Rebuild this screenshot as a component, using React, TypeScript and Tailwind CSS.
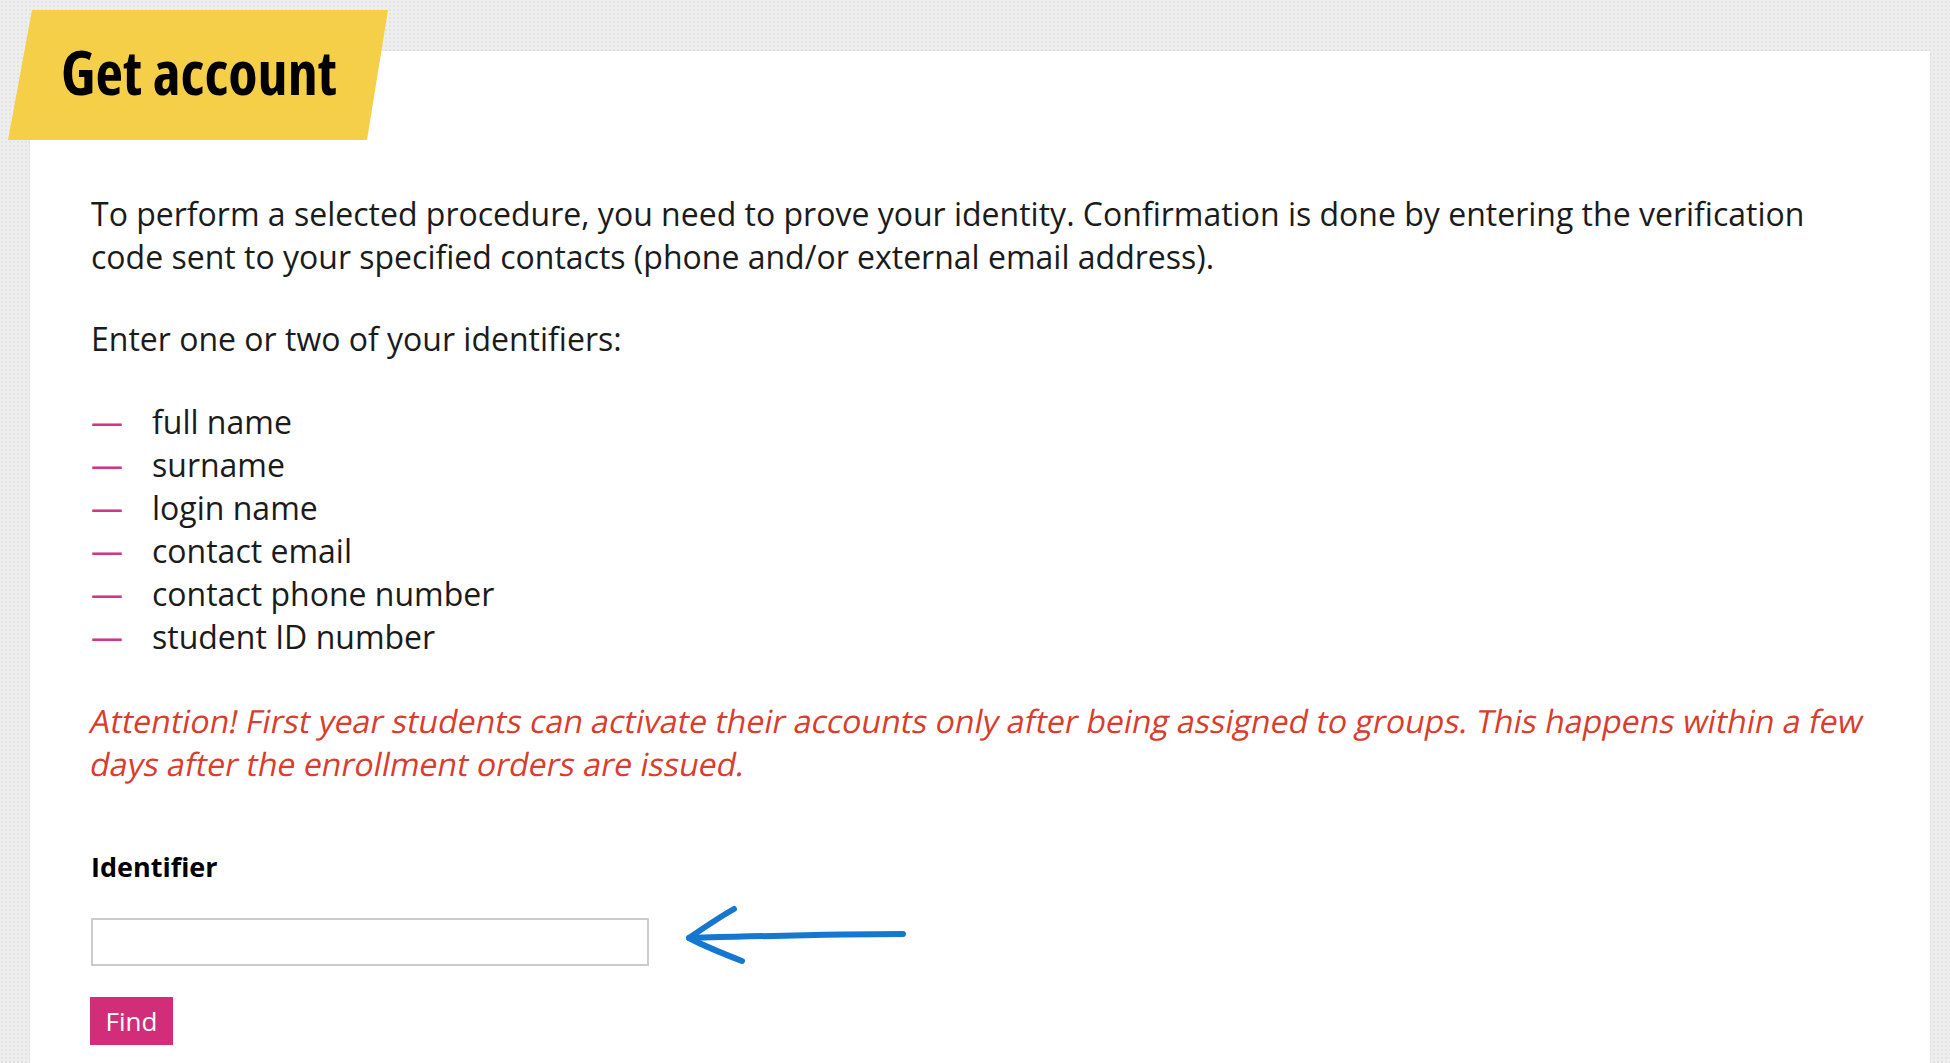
import React from 'react';

const IDENTIFIERS = [
    'full name',
    'surname',
    'login name',
    'contact email',
    'contact phone number',
    'student ID number'
];

// hand-drawn style arrow pointing at the input
function ArrowLeft() {
    return (
        <svg width="224" height="62" viewBox="0 0 224 62" fill="none" className="-mt-[14px] ml-[35px] shrink-0">
            <path d="M219 30 C 150 30, 80 32, 5 34" stroke="#1677d0" strokeWidth="6" strokeLinecap="round" />
            <path d="M50 5 C 34 14, 18 25, 5 34 C 20 42, 40 50, 58 57" stroke="#1677d0" strokeWidth="6" strokeLinecap="round" strokeLinejoin="round" />
        </svg>
    );
}

export default function App() {
    return (
        <div className="min-h-screen bg-[#eeeeee] bg-[radial-gradient(#e3e3e3_1px,transparent_1px)] bg-[size:4px_4px] pt-[51px] pl-[30px] pr-[20px] font-['Open_Sans',sans-serif] text-[#1b1b1b]">
            <div className="relative bg-white min-h-[1012px] pt-[141px] pl-[61px] pr-[60px] shadow-[0_0_3px_rgba(0,0,0,0.05)]">
                {/* title banner sticks out of the card */}
                <div className="absolute -left-[22px] -top-[41px] w-[380px] h-[130px] bg-[#f5cf47] [clip-path:polygon(24px_0,380px_0,359px_130px,0_130px)] flex items-center pl-[53px] pb-[6px]">
                    <h1 className="text-[60px] font-bold font-stretch-condensed leading-none text-black">Get account</h1>
                </div>

                <div className="text-[32px] leading-[43px]">
                    <p className="mb-[39px]">
                        To perform a selected procedure, you need to prove your identity. Confirmation is done by entering the verification code sent to your specified contacts (phone and/or external email address).
                    </p>
                    <p className="mb-[40px]">Enter one or two of your identifiers:</p>
                    <ul className="mb-[41px]">
                        {IDENTIFIERS.map(item => (
                            <li key={item} className="flex">
                                <span className="w-[61px] shrink-0 text-[#d0358a]">—</span>
                                <span>{item}</span>
                            </li>
                        ))}
                    </ul>
                    {/* slanted regular face, like the browser's synthetic italic */}
                    <p className="text-[#d83d2d]">
                        <span className="block -skew-x-[11deg]">Attention! First year students can activate their accounts only after being assigned to groups. This happens within a few</span>
                        <span className="block -skew-x-[11deg]">days after the enrollment orders are issued.</span>
                    </p>
                </div>

                <form className="mt-[64px]" onSubmit={e => e.preventDefault()}>
                    <label className="block text-[27px] leading-[36px] font-bold text-black mb-[33px]">Identifier</label>
                    <div className="flex items-start">
                        <input type="text" className="w-[558px] h-[48px] border-2 border-[#cccccc] bg-white px-3 text-[26px] outline-none" />
                        <ArrowLeft />
                    </div>
                    <button type="submit" className="mt-[31px] -ml-px w-[83px] h-[48px] bg-[#d22d78] text-white text-[26px] leading-none">
                        Find
                    </button>
                </form>
            </div>
        </div>
    );
}
